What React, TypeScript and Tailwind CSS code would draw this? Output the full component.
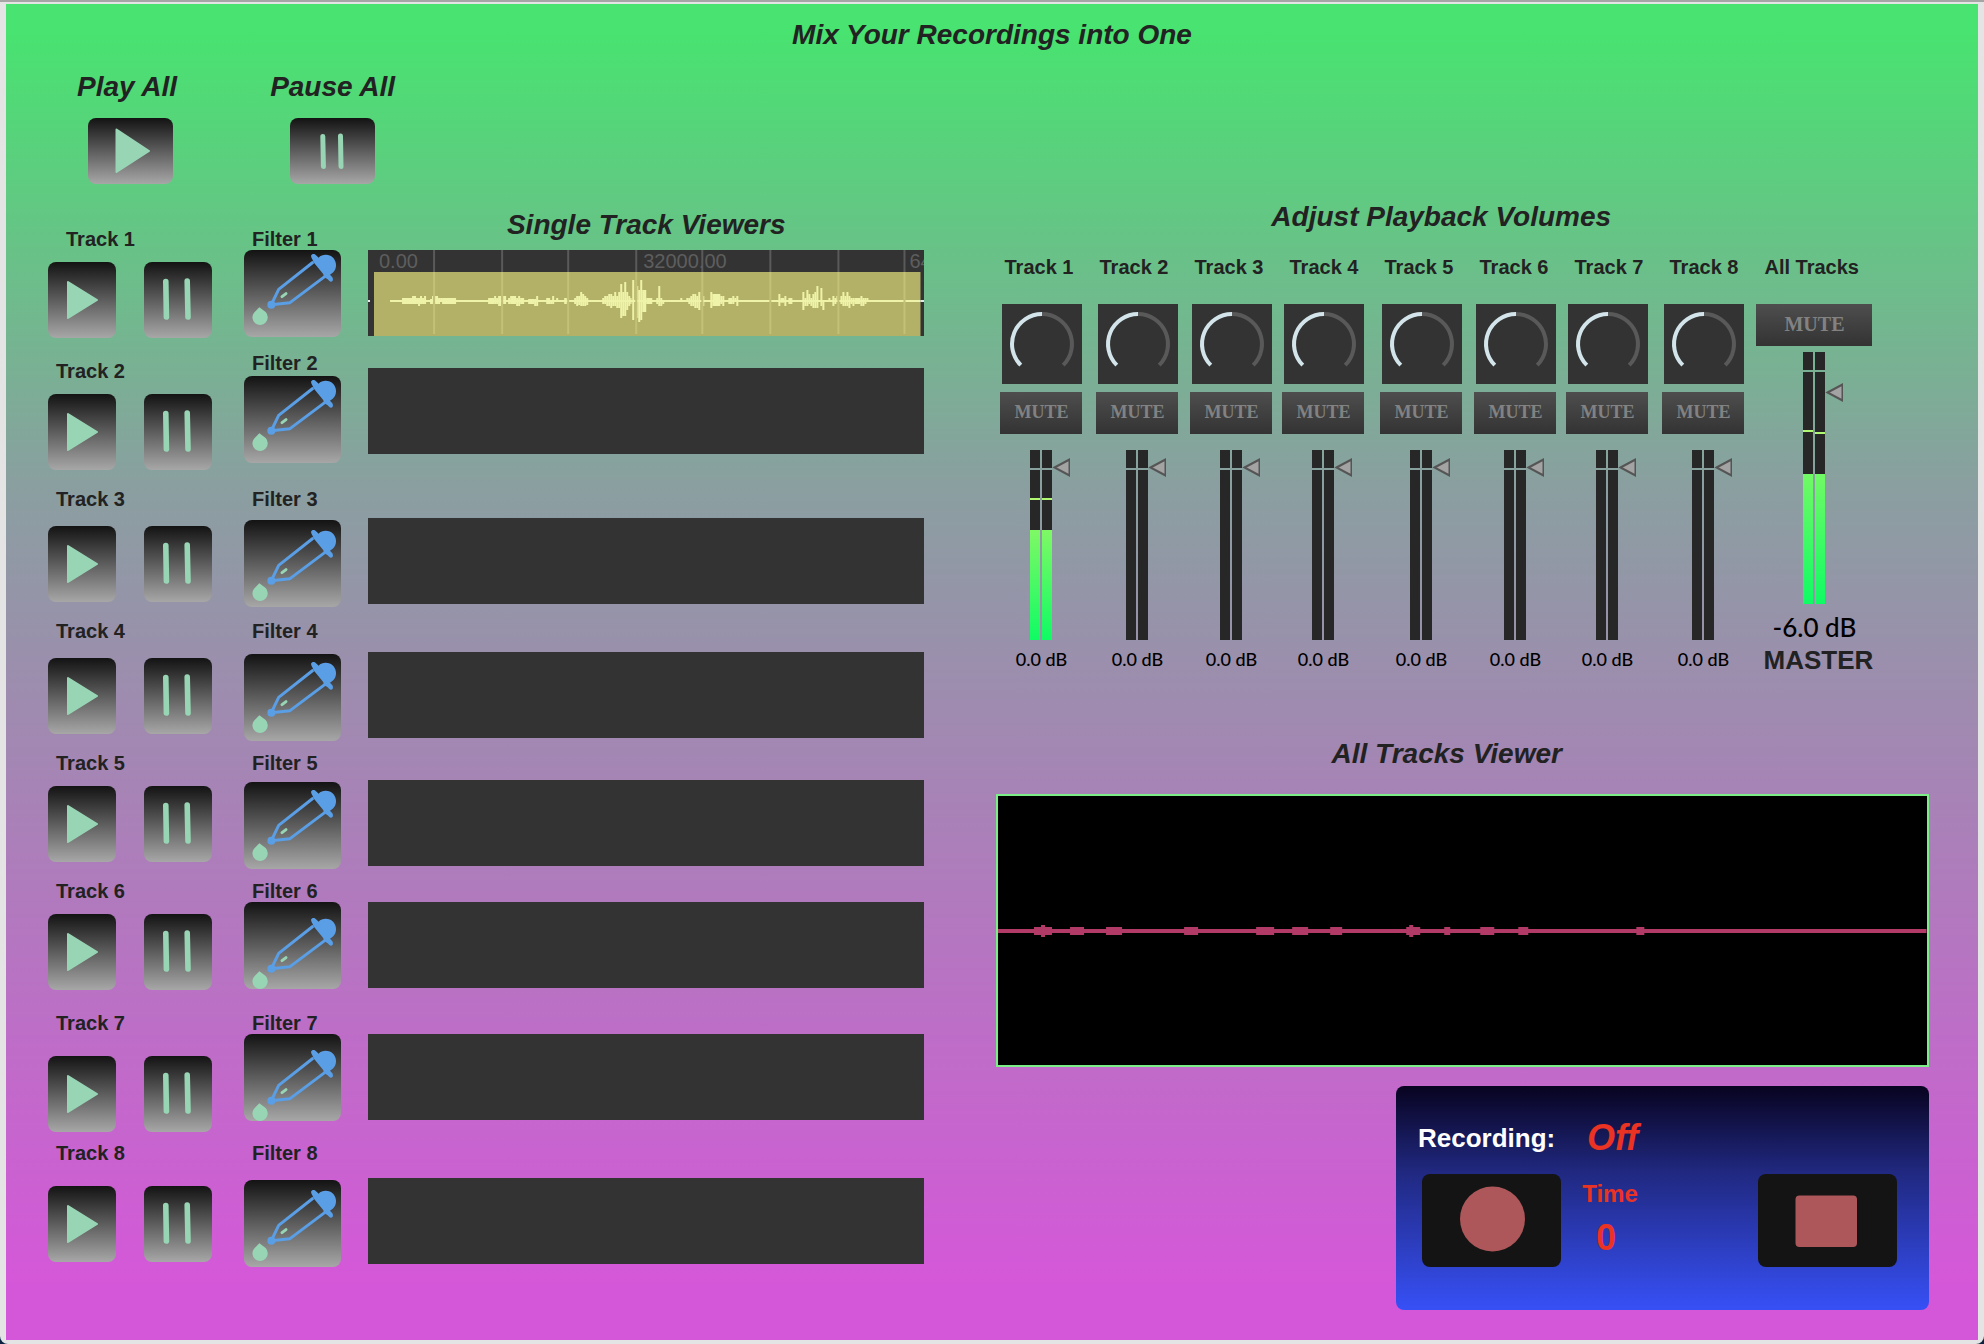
import React from "react";

type Bar = [x: number, w: number, top: number, bottom: number];

const WAVE_LEFT: Bar[] = [
  [108, 30, 156, 174], [138, 12, 150, 174], [150, 6, 156, 174], [156, 6, 156, 180], [162, 6, 150, 174],
  [168, 6, 156, 174], [174, 6, 150, 174], [192, 6, 159, 174], [198, 4, 150, 174], [207, 9, 150, 174],
  [216, 6, 156, 174], [222, 6, 156, 168], [228, 42, 156, 174], [366, 18, 156, 174], [384, 6, 150, 174],
  [390, 6, 156, 174], [396, 9, 150, 180], [411, 9, 150, 174], [426, 6, 156, 174], [432, 18, 150, 174],
  [450, 6, 156, 180], [456, 6, 150, 180], [462, 12, 156, 174], [486, 18, 159, 174], [504, 6, 159, 180],
  [510, 6, 150, 180], [540, 12, 156, 174], [552, 6, 162, 174], [558, 6, 150, 174], [570, 6, 156, 168],
  [594, 8, 156, 174], [624, 6, 156, 174], [630, 6, 150, 180], [636, 6, 150, 177], [642, 6, 138, 180],
  [648, 6, 144, 180], [654, 6, 150, 180], [660, 6, 156, 177], [708, 6, 156, 174], [714, 6, 150, 174],
  [720, 6, 150, 180], [726, 6, 144, 180], [732, 6, 144, 186], [738, 6, 150, 180], [744, 6, 138, 180],
  [750, 6, 150, 186], [756, 6, 138, 186], [762, 6, 114, 216], [768, 6, 138, 210], [774, 6, 108, 210],
  [780, 6, 138, 192], [786, 6, 150, 180], [792, 4, 156, 174], [798, 6, 102, 222], [813, 3, 120, 216],
  [816, 6, 132, 228], [822, 6, 102, 222], [828, 12, 132, 198], [840, 18, 156, 174], [870, 6, 156, 174],
  [876, 6, 120, 180], [882, 6, 156, 180], [888, 6, 162, 174],
];

const WAVE_RIGHT: Bar[] = [
  [120, 6, 156, 168], [138, 6, 156, 168], [144, 6, 156, 174], [150, 6, 150, 180], [156, 6, 144, 180],
  [162, 6, 144, 186], [168, 6, 150, 186], [174, 6, 138, 192], [189, 3, 150, 180], [210, 6, 138, 186],
  [216, 24, 144, 180], [240, 6, 150, 174], [246, 6, 150, 180], [264, 12, 156, 174], [276, 6, 150, 174],
  [282, 6, 156, 168], [288, 6, 150, 180], [414, 6, 144, 180], [420, 12, 156, 170], [432, 6, 150, 180],
  [444, 12, 156, 174], [486, 6, 138, 192], [492, 6, 156, 180], [498, 6, 132, 180], [504, 6, 144, 174],
  [510, 6, 156, 180], [516, 6, 144, 186], [522, 6, 138, 186], [528, 6, 120, 186], [540, 6, 126, 180],
  [546, 6, 162, 192], [564, 6, 156, 168], [576, 6, 150, 180], [582, 6, 156, 174], [588, 3, 150, 168],
  [600, 6, 150, 174], [606, 6, 138, 180], [612, 6, 150, 180], [618, 6, 138, 180], [624, 6, 150, 186],
  [630, 6, 156, 174], [636, 6, 156, 180], [642, 18, 156, 174], [660, 6, 150, 180], [666, 6, 156, 180],
  [672, 6, 156, 174], [678, 6, 156, 168],
];

const GRID = [198, 402, 600, 804, 1002, 1206, 1410, 1608];

const MIX_BLOCKS = [
  [38, 18], [74, 14], [110, 16], [188, 14], [260, 18], [296, 16],
  [334, 12], [410, 14], [448, 6], [484, 14], [522, 10], [640, 8],
];

interface TrackRow {
  row: string;
  label: string;
  track: string;
  filterLabel: string;
  filter: string;
  dropper: string;
}

const ROWS: TrackRow[] = [
  { row: "min-h-[132px]", label: "ml-[18px]", track: "mt-[13px]", filterLabel: "", filter: "mt-px", dropper: "pt-1" },
  { row: "min-h-32", label: "ml-2", track: "mt-[13px]", filterLabel: "-mt-2", filter: "mt-[3px]", dropper: "pt-1" },
  { row: "min-h-[132px]", label: "ml-2", track: "mt-[17px]", filterLabel: "", filter: "mt-[11px]", dropper: "pt-2.5" },
  { row: "min-h-[132px]", label: "ml-2", track: "mt-[17px]", filterLabel: "", filter: "mt-[13px]", dropper: "pt-2" },
  { row: "min-h-32", label: "ml-2", track: "mt-[13px]", filterLabel: "", filter: "mt-[9px]", dropper: "pt-2" },
  { row: "min-h-[132px]", label: "ml-2", track: "mt-[13px]", filterLabel: "", filter: "mt-px", dropper: "pt-4" },
  { row: "min-h-[130px]", label: "ml-2", track: "mt-[23px]", filterLabel: "", filter: "mt-px", dropper: "pt-4" },
  { row: "", label: "ml-2", track: "mt-[23px]", filterLabel: "", filter: "mt-[17px]", dropper: "pt-2.5" },
];

const VIEWER_GAPS = ["mt-2.5", "mt-8", "mt-16", "mt-12", "mt-[42px]", "mt-9", "mt-[46px]", "mt-[58px]"];

const CHANNEL_WIDTHS = ["w-24", "w-[94px]", "w-[92px]", "w-[98px]", "w-[94px]", "w-[92px]", "w-24", "w-[94px]"];

const PAD = "bg-linear-to-b/srgb from-[#131313] to-[#a7a7a7] rounded-lg overflow-hidden cursor-pointer";

function Heading({ children }: { children: React.ReactNode }) {
  return <h2 className="text-[28px] leading-[30px] font-bold italic text-center whitespace-nowrap">{children}</h2>;
}

function PlayButton({ label }: { label: string }) {
  return (
    <button type="button" aria-label={label} className={`h-[76px] w-[68px] ${PAD}`}>
      <svg viewBox="0 0 68 76" className="block size-full">
        <path d="M20 20 L49 38 L20 56 Z" fill="#98d5b4" stroke="#98d5b4" strokeWidth="2" strokeLinejoin="round" />
      </svg>
    </button>
  );
}

function PauseButton({ label }: { label: string }) {
  return (
    <button type="button" aria-label={label} className={`h-[76px] w-[68px] ${PAD}`}>
      <svg viewBox="0 0 68 76" className="block size-full" stroke="#98d5b4" strokeWidth="5.6" strokeLinecap="round">
        <path d="M21.8 19.5 L22.4 55" />
        <path d="M43.2 19 L44 55" />
      </svg>
    </button>
  );
}

function Dropper() {
  return (
    <svg viewBox="0 0 291 213" className="block w-full">
      <path d="M208 24 L104 106 L82 152 L138 146 L242 68" fill="none" stroke="#5a9ee6" strokeWidth="9" strokeLinejoin="round" />
      <circle cx="82" cy="152" r="12" fill="#5a9ee6" />
      <path
        d="M201 5 C204 -2 212 -1 216 4 L224 11 C234 0 256 -1 268 12 C280 26 278 46 266 56 L258 62 L265 70 C269 77 266 84 260 83 C256 82 254 79 251 76 L241 70 C238 68 240 62 237 59 L208 24 C208 18 201 12 201 5 Z"
        fill="#5a9ee6"
      />
      <path d="M114 128 L126 119" stroke="#98d5b4" strokeWidth="9" strokeLinecap="round" />
      <path d="M46 160 L65 174 A23 23 0 1 1 30 176 Z" fill="#98d5b4" />
    </svg>
  );
}

function TrackControls({ n, c }: { n: number; c: TrackRow }) {
  return (
    <div className={`flex gap-8 ${c.row}`}>
      <div>
        <h3 className={`text-xl leading-5 font-bold ${c.label}`}>Track {n}</h3>
        <div className={`flex gap-7 ${c.track}`}>
          <PlayButton label={`Play track ${n}`} />
          <PauseButton label={`Pause track ${n}`} />
        </div>
      </div>
      <div>
        <h3 className={`ml-2 text-xl leading-5 font-bold ${c.filterLabel}`}>Filter {n}</h3>
        <button type="button" aria-label={`Open filter ${n}`} className={`flex h-[87px] w-[97px] items-start ${PAD} ${c.filter} ${c.dropper}`}>
          <Dropper />
        </button>
      </div>
    </div>
  );
}

function RecordedWave() {
  return (
    <div className="relative h-[86px] overflow-hidden bg-[#333333]">
      <svg viewBox="0 0 1668 258" preserveAspectRatio="none" className="block size-full">
        <rect x="18" y="66" width="1638" height="192" fill="#b3b167" />
        <rect x="0" y="150" width="6" height="6" fill="#e6eef2" />
        <rect x="66" y="150" width="1590" height="6" fill="#eef3a9" />
        <rect x="1656" y="150" width="12" height="6" fill="#dfeaf0" />
        <g fill="#eef3a9" transform="translate(-6 -12)">
          {WAVE_LEFT.map(([x, w, t, b]) => <rect key={x} x={x} y={t} width={w} height={b - t} />)}
        </g>
        <g fill="#eef3a9" transform="translate(816 -12)">
          {WAVE_RIGHT.map(([x, w, t, b]) => <rect key={x} x={x} y={t} width={w} height={b - t} />)}
        </g>
        {GRID.map((x) => (
          <g key={x}>
            <rect x={x - 3} y="0" width="6" height="66" fill="#5a5a5a" />
            <rect x={x - 3} y="66" width="6" height="186" fill="#c3c077" />
          </g>
        ))}
      </svg>
      <div className="absolute inset-x-0 top-px grid grid-cols-[264fr_266fr_15fr] pl-[11px] text-xl leading-5 text-[#5e5e5e]">
        <span className="min-w-0">0.00</span>
        <span className="min-w-0">32000.00</span>
        <span className="min-w-0">64000.00</span>
      </div>
    </div>
  );
}

function Knob({ label }: { label: string }) {
  return (
    <label className="relative ml-0.5 block size-20 bg-[#333333]">
      <svg viewBox="0 0 80 80" className="block size-full" fill="none" strokeWidth="4">
        <path d="M40 10 A30 30 0 0 1 61.2 61.2" stroke="#595959" />
        <path d="M18.8 61.2 A30 30 0 0 1 40 10" stroke="#d3e5ea" />
      </svg>
      <input type="range" aria-label={label} className="absolute inset-0 size-full cursor-pointer opacity-0" />
    </label>
  );
}

function MuteButton({ big = false }: { big?: boolean }) {
  return (
    <button
      type="button"
      className={`h-[42px] cursor-pointer bg-linear-to-b/srgb from-[#4e4e4e] to-[#333333] pb-0.5 font-['Liberation_Serif',serif] font-bold text-[#828282] ${big ? "w-full text-xl" : "w-[82px] text-lg"}`}
    >
      MUTE
    </button>
  );
}

function Meter({ label, height, level, peaks, pointer }: { label: string; height: string; level: string; peaks: string[]; pointer: string }) {
  return (
    <label className={`relative flex w-[22px] gap-0.5 ${height}`}>
      {[0, 1].map((i) => (
        <span key={i} className="relative flex flex-1 flex-col gap-0.5">
          <span className="h-[18px] bg-[#272727]" />
          <span className="flex flex-1 flex-col justify-end bg-[#272727]">
            <span className={`bg-linear-to-b/srgb to-[#0ffb64] ${level}`} />
          </span>
          {peaks[i] && <span className={`absolute inset-x-0 h-0.5 bg-[#b0f872] ${peaks[i]}`} />}
        </span>
      ))}
      <svg viewBox="0 0 18 19" className={`absolute left-full h-[19px] w-[18px] ${pointer}`}>
        <path d="M2.500 9.500 L17.500 1.500 V17.500 Z" fill="#a3a3a3" stroke="#555555" strokeWidth="2" />
      </svg>
      <input type="range" aria-label={label} className="absolute inset-0 size-full cursor-pointer opacity-0" />
    </label>
  );
}

function Channel({ n, width }: { n: number; width: string }) {
  return (
    <div className={width}>
      <Knob label={`Track ${n} pan`} />
      <div className="mt-2 flex w-[82px] flex-col items-center">
        <MuteButton />
        <div className="mt-4">
          <Meter
            label={`Track ${n} volume`}
            height="h-[190px]"
            level={n === 1 ? "h-[110px] from-[#80f866]" : "h-0"}
            peaks={n === 1 ? ["top-12", "top-12"] : []}
            pointer="top-2"
          />
        </div>
        <output className="mt-[9px] font-[Lato,sans-serif] text-lg leading-5 font-medium whitespace-nowrap text-black">0.0 dB</output>
      </div>
    </div>
  );
}

function Mixer() {
  return (
    <section>
      <div className="pr-[43px]">
        <Heading>Adjust Playback Volumes</Heading>
      </div>
      <div className="mt-[25px] flex pl-2 text-xl leading-5 font-bold whitespace-nowrap">
        {CHANNEL_WIDTHS.map((_, i) => <h3 key={i} className="w-[95px]">Track {i + 1}</h3>)}
        <h3>All Tracks</h3>
      </div>
      <div className="mt-[27px] flex pl-1">
        {CHANNEL_WIDTHS.map((w, i) => <Channel key={i} n={i + 1} width={w} />)}
        <div className="flex w-[116px] flex-col items-center">
          <MuteButton big />
          <div className="mt-1.5">
            <Meter
              label="Master volume"
              height="h-[252px]"
              level="h-[130px] from-[#72f966]"
              peaks={["top-[78px]", "top-20"]}
              pointer="top-[31px]"
            />
          </div>
          <output className="mt-[9px] font-[Lato,sans-serif] text-[26px] leading-7 font-medium whitespace-nowrap text-black">-6.0 dB</output>
          <span className="mt-[5px] ml-2 text-[26px] leading-7 font-bold">MASTER</span>
        </div>
      </div>
    </section>
  );
}

function AllTracksViewer() {
  return (
    <section className="mt-[65px]">
      <div className="pr-8">
        <Heading>All Tracks Viewer</Heading>
      </div>
      <div className="mt-[25px] h-[273px] border-2 border-[#7bee87] bg-black">
        <svg viewBox="0 0 928 269" preserveAspectRatio="none" className="block size-full" fill="#b23a66">
          <rect x="0" y="133" width="928" height="4" />
          {MIX_BLOCKS.map(([x, w]) => <rect key={x} x={x - 2} y="131" width={w} height="8" />)}
          <rect x="43" y="129" width="4" height="12" />
          <rect x="411" y="129" width="4" height="12" />
        </svg>
      </div>
    </section>
  );
}

function Recorder() {
  return (
    <section className="mt-[19px] ml-auto h-56 w-[533px] rounded-lg bg-linear-to-b/srgb from-[#080320] via-[#20287f] via-38% to-[#3750f6] pt-8 pl-[22px] pr-8">
      <div className="flex items-center">
        <h3 className="w-[169px] text-[26px] leading-10 font-bold text-white">Recording:</h3>
        <output className="text-4xl leading-10 font-bold text-[#eb3323] italic">Off</output>
      </div>
      <div className="mt-4 flex pl-1">
        <button type="button" aria-label="Record" className="h-[93px] w-[139px] cursor-pointer rounded-lg bg-[#141414]">
          <svg viewBox="0 0 139 93" className="block size-full">
            <circle cx="70.500" cy="45" r="32.500" fill="#ad575a" />
          </svg>
        </button>
        <div className="ml-[21px] flex w-14 flex-col items-center pt-1 font-bold text-[#eb3323]">
          <h3 className="text-2xl leading-8">Time</h3>
          <output className="mt-2 mr-2 text-4xl leading-10">0</output>
        </div>
        <button type="button" aria-label="Stop" className="ml-auto h-[93px] w-[139px] cursor-pointer rounded-lg bg-[#141414]">
          <svg viewBox="0 0 139 93" className="block size-full">
            <rect x="37.500" y="21.500" width="61.500" height="51.500" rx="4" fill="#ad575a" />
          </svg>
        </button>
      </div>
    </section>
  );
}

export default function App() {
  return (
    <div className="min-h-screen bg-[#0b2340] font-['Liberation_Sans',Arial,sans-serif] text-[#222222]">
      <div className="flex min-h-screen flex-col rounded-b-lg border-t-2 border-[#a5a5a5] bg-[#e4e4e4] px-1.5 pt-0.5 pb-1">
        <main className="flex-1 bg-linear-to-b/srgb from-[#48e370] from-2% via-[#8a9fa0] via-36% to-[#d557d9] to-96% pt-4">
          <h1 className="text-center text-[28px] leading-[30px] font-bold italic">Mix Your Recordings into One</h1>
          <div className="grid grid-cols-[918fr_932fr] gap-x-[72px] pr-[49px]">
            <section className="pt-[22px]">
              <div className="flex gap-[93px] pl-[71px]">
                <div className="flex flex-col gap-4">
                  <Heading>Play All</Heading>
                  <button type="button" aria-label="Play all" className={`ml-[11px] h-[66px] w-[85px] ${PAD}`}>
                    <svg viewBox="0 0 85 66" className="block size-full">
                      <path d="M28.500 11.500 L61 33 L28.500 54 Z" fill="#98d5b4" stroke="#98d5b4" strokeWidth="2" strokeLinejoin="round" />
                    </svg>
                  </button>
                </div>
                <div className="flex flex-col items-center gap-4">
                  <Heading>Pause All</Heading>
                  <button type="button" aria-label="Pause all" className={`h-[66px] w-[85px] ${PAD}`}>
                    <svg viewBox="0 0 85 66" className="block size-full" stroke="#98d5b4" strokeWidth="5" strokeLinecap="round">
                      <path d="M32.800 18.500 L33.400 48.500" />
                      <path d="M50.500 18 L51 48.500" />
                    </svg>
                  </button>
                </div>
              </div>
              <div className="mt-[26px] flex gap-[27px] pl-[42px]">
                <div className="flex-none pt-[19px]">
                  {ROWS.map((c, i) => <TrackControls key={i} n={i + 1} c={c} />)}
                </div>
                <div className="min-w-0 flex-1">
                  <Heading>Single Track Viewers</Heading>
                  {VIEWER_GAPS.map((gap, i) => (
                    <div key={i} className={gap}>
                      {i === 0 ? <RecordedWave /> : <div className="h-[86px] bg-[#333333]" />}
                    </div>
                  ))}
                </div>
              </div>
            </section>
            <section className="pt-[152px]">
              <Mixer />
              <AllTracksViewer />
              <Recorder />
            </section>
          </div>
        </main>
      </div>
    </div>
  );
}
